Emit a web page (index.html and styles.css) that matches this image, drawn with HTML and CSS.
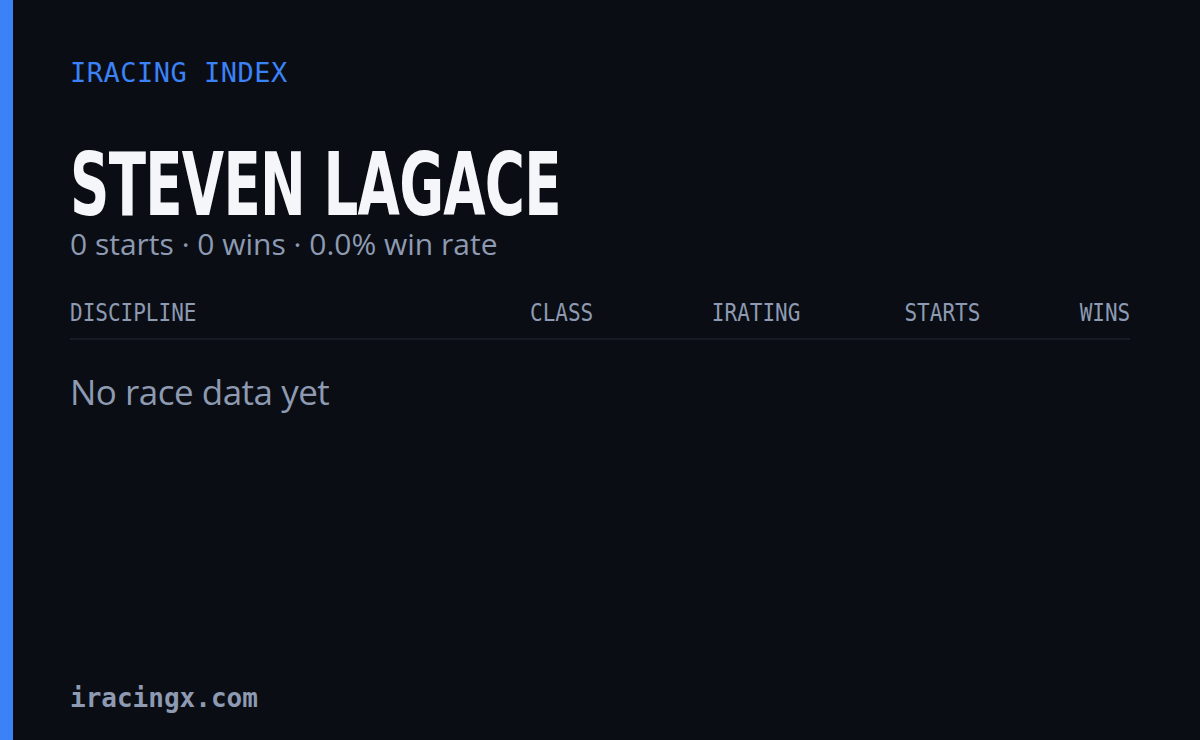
FILE: index.html
```html
<!DOCTYPE html>
<html>
<head>
<meta charset="utf-8">
<link rel="stylesheet" href="styles.css">
</head>
<body>
<div class="card">
  <div class="accent"></div>
  <div class="content">
    <div class="brand">IRACING INDEX</div>
    <h1 class="name"><span class="name-text">STEVEN LAGACE</span></h1>
    <div class="summary">0 starts · 0 wins · 0.0% win rate</div>
    <div class="table-head">
      <span class="col left"><span class="cell">DISCIPLINE</span></span>
      <span class="col"><span class="cell">CLASS</span></span>
      <span class="col"><span class="cell">IRATING</span></span>
      <span class="col"><span class="cell">STARTS</span></span>
      <span class="col"><span class="cell">WINS</span></span>
    </div>
    <div class="empty">No race data yet</div>
    <div class="spacer"></div>
    <div class="footer">iracingx.com</div>
  </div>
</div>
</body>
</html>
```
FILE: styles.css
```css
html, body {
  margin: 0;
  padding: 0;
  width: 1200px;
  height: 740px;
  background: #0a0d14;
  overflow: hidden;
}
.card {
  display: flex;
  width: 1200px;
  height: 740px;
}
.accent {
  width: 13px;
  background: #3b82f6;
  flex: none;
}
.content {
  flex: 1;
  display: flex;
  flex-direction: column;
  padding: 56px 70px 26px 57px;
}
.brand {
  font-family: "DejaVu Sans Mono", monospace;
  font-size: 27px;
  color: #3b82f6;
  line-height: 34px;
  letter-spacing: 0.5px;
}
.name {
  margin: 55px 0 0 0;
  font-family: "DejaVu Sans Condensed", "DejaVu Sans", sans-serif;
  font-weight: 700;
  font-size: 88px;
  line-height: 80px;
  color: #f5f6fa;
  letter-spacing: -1px;
  white-space: nowrap;
}
.name-text {
  display: inline-block;
  transform: scaleX(0.69);
  transform-origin: left center;
}
.summary {
  margin-top: 1px;
  font-family: "Open Sans", sans-serif;
  font-size: 30px;
  line-height: 36px;
  color: #8d9ab1;
}
.table-head {
  margin-top: 38px;
  display: grid;
  grid-template-columns: 1fr 140px 207px 180px 150px;
  padding-bottom: 12px;
  border-bottom: 2px solid #161b25;
  font-family: "DejaVu Sans Mono", monospace;
  font-size: 25px;
  line-height: 26px;
  color: #8d9ab1;
}
.col { text-align: right; white-space: nowrap; }
.col.left { text-align: left; }
.cell {
  display: inline-block;
  transform: scaleX(0.84);
  transform-origin: right center;
}
.col.left .cell { transform-origin: left center; }
.empty {
  margin-top: 30px;
  font-family: "Open Sans", sans-serif;
  font-size: 35px;
  line-height: 44px;
  color: #8d9ab1;
  letter-spacing: -0.5px;
}
.spacer { flex: 1; }
.footer {
  font-family: "DejaVu Sans Mono", monospace;
  font-weight: 700;
  font-size: 26px;
  line-height: 32px;
  color: #8d9ab1;
}
```
